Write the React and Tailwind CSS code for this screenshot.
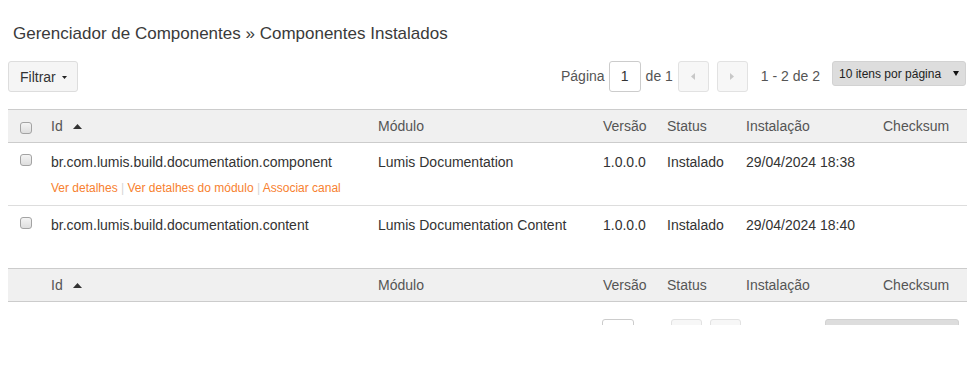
import React from 'react';

const COLS = 'grid grid-cols-[35px_327px_225px_64px_79px_137px_1fr]';

const rows = [
  {
    id: 'br.com.lumis.build.documentation.component',
    modulo: 'Lumis Documentation',
    versao: '1.0.0.0',
    status: 'Instalado',
    instalacao: '29/04/2024 18:38',
    actions: true,
  },
  {
    id: 'br.com.lumis.build.documentation.content',
    modulo: 'Lumis Documentation Content',
    versao: '1.0.0.0',
    status: 'Instalado',
    instalacao: '29/04/2024 18:40',
    actions: false,
  },
];

const Checkbox = ({ className = '' }) => (
  <div
    className={`w-[12px] h-[12px] rounded-[3px] border border-[#a3a3a3] bg-gradient-to-b from-[#f4f4f4] to-[#dedede] ${className}`}
  />
);

const SortUp = () => (
  <svg width="9" height="5" viewBox="0 0 9 5" className="ml-[10px] mt-[1px]">
    <path d="M0 5 L4.5 0 L9 5 Z" fill="#333" />
  </svg>
);

const HeaderRow = ({ withCheckbox }) => (
  <div className={`${COLS} h-[34px] bg-[#f0f0f0] border-y border-[#cccccc] text-[14px] text-[#555]`}>
    <div className="pl-3">{withCheckbox && <Checkbox className="mt-[12px]" />}</div>
    <div className="pl-2 flex items-center">
      Id
      <SortUp />
    </div>
    <div className="pl-2 flex items-center">Módulo</div>
    <div className="pl-2 flex items-center">Versão</div>
    <div className="pl-2 flex items-center">Status</div>
    <div className="pl-2 flex items-center">Instalação</div>
    <div className="pl-2 flex items-center">Checksum</div>
  </div>
);

// the bottom copy is cut by the frame below its top edge, so its labels never show
const Pagination = ({ className = '', clipped = false }) => (
  <div className={`flex items-start text-[14px] text-[#555] ${className}`}>
    {clipped ? <span className="w-[44px] h-[31px]" /> : <span className="leading-[31px]">Página</span>}
    <div className="ml-[4px] w-[32px] h-[31px] border border-[#cccccc] rounded-[3px] bg-white flex items-center justify-center text-[#333]">
      {!clipped && '1'}
    </div>
    {clipped ? <span className="ml-[5px] w-[27px] h-[31px]" /> : <span className="ml-[5px] leading-[31px]">de 1</span>}
    <button className="ml-[5px] w-[31px] h-[31px] border border-[#e2e2e2] rounded-[3px] bg-[#f7f7f7] flex items-center justify-center">
      <svg width="4" height="7" viewBox="0 0 4 7">
        <path d="M4 0 L0 3.5 L4 7 Z" fill="#c8c8c8" />
      </svg>
    </button>
    <button className="ml-[8px] w-[31px] h-[31px] border border-[#e2e2e2] rounded-[3px] bg-[#f7f7f7] flex items-center justify-center">
      <svg width="4" height="7" viewBox="0 0 4 7">
        <path d="M0 0 L4 3.5 L0 7 Z" fill="#c8c8c8" />
      </svg>
    </button>
    {clipped ? <span className="ml-[13px] w-[59px] h-[31px]" /> : <span className="ml-[13px] leading-[31px]">1 - 2 de 2</span>}
    <div className="ml-[12px] w-[134px] h-[25px] rounded-[3px] bg-[#dddddd] border border-[#d2d2d2] flex items-center justify-between pl-[6px] pr-[6px] text-[12px] text-[#222]">
      <span>{!clipped && '10 itens por página'}</span>
      <svg width="6" height="5" viewBox="0 0 6 5">
        <path d="M0 0 L6 0 L3 5 Z" fill="#111" />
      </svg>
    </div>
  </div>
);

export default function App() {
  return (
    <div className="w-[975px] h-[372px] bg-white font-['Liberation_Sans',Arial,sans-serif] text-[#333]">
      <div className="h-[325px] overflow-hidden px-2">
        <h1 className="pl-[5px] pt-[23px] text-[17px] leading-[22px] text-[#3a3a3a] font-normal">
          Gerenciador de Componentes » Componentes Instalados
        </h1>

        {/* Toolbar */}
        <div className="mt-4 flex justify-between items-start">
          <button className="h-[31px] pt-px pl-[11px] pr-[10px] border border-[#dddddd] bg-[#f5f5f5] rounded-[3px] text-[14px] text-[#333] flex items-center">
            Filtrar
            <svg width="5" height="3" viewBox="0 0 5 3" className="ml-[6px]">
              <path d="M0 0 L5 0 L2.5 3 Z" fill="#222" />
            </svg>
          </button>
          <Pagination className="mr-px" />
        </div>

        {/* Table */}
        <div className="mt-[17px]">
          <HeaderRow withCheckbox />

          {rows.map((r, i) => (
            <div
              key={r.id}
              className={`${COLS} h-[62px] text-[14px] leading-5 text-[#333] ${i === 0 ? 'h-[63px] border-b border-[#dddddd]' : ''}`}
            >
              <div className="pl-3">
                <Checkbox className="mt-[11px]" />
              </div>
              <div className="pl-2 pt-[9px]">
                <div>{r.id}</div>
                {r.actions && (
                  <div className="mt-2 text-[12px] leading-4 text-[#f7812f] whitespace-nowrap">
                    <span>Ver detalhes</span>
                    <span className="text-[#d6d6d6]"> | </span>
                    <span>Ver detalhes do módulo</span>
                    <span className="text-[#d6d6d6]"> | </span>
                    <span>Associar canal</span>
                  </div>
                )}
              </div>
              <div className="pl-2 pt-[9px]">{r.modulo}</div>
              <div className="pl-2 pt-[9px]">{r.versao}</div>
              <div className="pl-2 pt-[9px]">{r.status}</div>
              <div className="pl-2 pt-[9px]">{r.instalacao}</div>
              <div className="pl-2 pt-[9px]" />
            </div>
          ))}

          <HeaderRow />
        </div>

        <div className="mt-[17px] flex justify-end">
          <Pagination className="mr-[8px]" clipped />
        </div>
      </div>
    </div>
  );
}
